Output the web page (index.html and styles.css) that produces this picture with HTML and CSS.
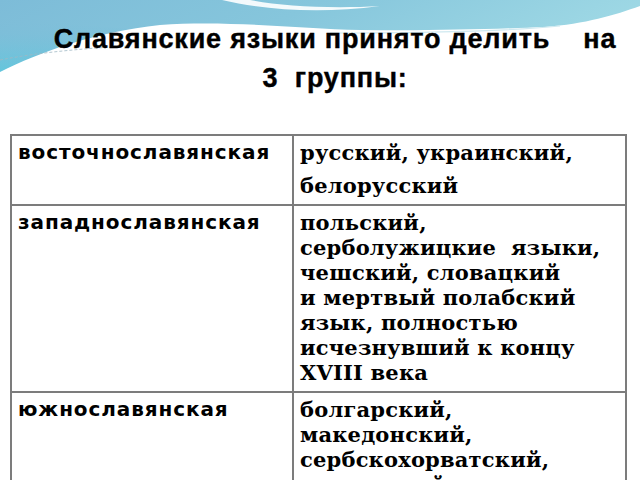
FILE: index.html
```html
<!DOCTYPE html>
<html lang="ru">
<head>
<meta charset="utf-8">
<title>Славянские языки</title>
<link rel="stylesheet" href="styles.css">
</head>
<body>
<div class="slide">
  <svg class="bg" width="640" height="110" viewBox="0 0 640 110" aria-hidden="true">
    <defs>
      <linearGradient id="sky" x1="0" y1="0" x2="1" y2="0.35">
        <stop offset="0" stop-color="#7dbcd8"/>
        <stop offset="0.45" stop-color="#86c6dc"/>
        <stop offset="1" stop-color="#a2dbe6"/>
      </linearGradient>
      <linearGradient id="cyan" x1="0" y1="0" x2="0" y2="1">
        <stop offset="0" stop-color="#7dbcd8" stop-opacity="0"/>
        <stop offset="1" stop-color="#52cade" stop-opacity="1"/>
      </linearGradient>
    </defs>
    <rect width="640" height="110" fill="url(#sky)"/>
    <path d="M0,20 L0,78 C40,60 90,40 150,30 Z" fill="url(#cyan)" opacity="0.8"/>
    <path d="M0,72 C40,52 95,32 160,25 C230,20 300,29 360,30 C430,31 500,29 545,27 C585,24 615,15 640,6 L640,110 L0,110 Z" fill="#ffffff"/>
    <path d="M222,0 C265,10 320,14 380,6 C330,9 280,6 250,0 Z" fill="#ffffff" opacity="0.9"/>
    <path d="M0,60 C40,52 90,48 130,46" stroke="#9fb8c4" stroke-width="0.8" stroke-dasharray="3 2" fill="none"/>
    <path d="M330,33 C420,33 500,32 560,26" stroke="#cfe9f0" stroke-width="1.2" fill="none"/>
  </svg>
  <h1 class="title">Славянские языки принято делить&nbsp;&nbsp;&nbsp; на<br>3&nbsp; группы:</h1>
  <table class="groups">
    <tr>
      <td class="name">восточнославянская</td>
      <td class="langs">
        <div>русский, украинский,</div>
        <div class="gap">белорусский</div>
      </td>
    </tr>
    <tr>
      <td class="name">западнославянская</td>
      <td class="langs">польский,<br>серболужицкие&nbsp; языки,<br>чешский, словацкий<br>и мертвый полабский<br>язык, полностью<br>исчезнувший к концу<br>XVIII века</td>
    </tr>
    <tr>
      <td class="name">южнославянская</td>
      <td class="langs">болгарский,<br>македонский,<br>сербскохорватский,<br>словенский</td>
    </tr>
  </table>
</div>
</body>
</html>
```
FILE: styles.css
```css
html, body {
  margin: 0;
  padding: 0;
  background: #ffffff;
}
.slide {
  position: relative;
  width: 640px;
  height: 480px;
  overflow: hidden;
  background: #ffffff;
}
.bg {
  position: absolute;
  left: 0;
  top: 0;
  z-index: 0;
}
.title {
  position: relative;
  z-index: 1;
  margin: 20px 0 0 0;
  padding-left: 30px;
  font-family: "Liberation Sans", Arial, sans-serif;
  font-weight: bold;
  font-size: 27px;
  letter-spacing: 0.8px;
  line-height: 39px;
  text-align: center;
  color: #000000;
  -webkit-text-stroke: 0.4px #000000;
}
.groups {
  position: relative;
  z-index: 1;
  margin: 36px 0 0 10px;
  width: 617px;
  border-collapse: collapse;
  border: 2px solid #7c7c7c;
}
.groups td {
  border: 2px solid #7c7c7c;
  vertical-align: top;
  padding: 4px 6px 6px 6px;
  color: #000000;
}
.name {
  width: 268px;
  font-family: "DejaVu Sans", sans-serif;
  font-weight: bold;
  font-size: 20px;
  letter-spacing: 0.9px;
  line-height: 25px;
  padding-left: 5px;
}
.langs {
  font-family: "DejaVu Serif", serif;
  font-weight: bold;
  font-size: 21px;
  letter-spacing: 0.2px;
  line-height: 25px;
}
.gap {
  margin-top: 8px;
}
.groups tr:first-child td {
  height: 58px;
}
```
